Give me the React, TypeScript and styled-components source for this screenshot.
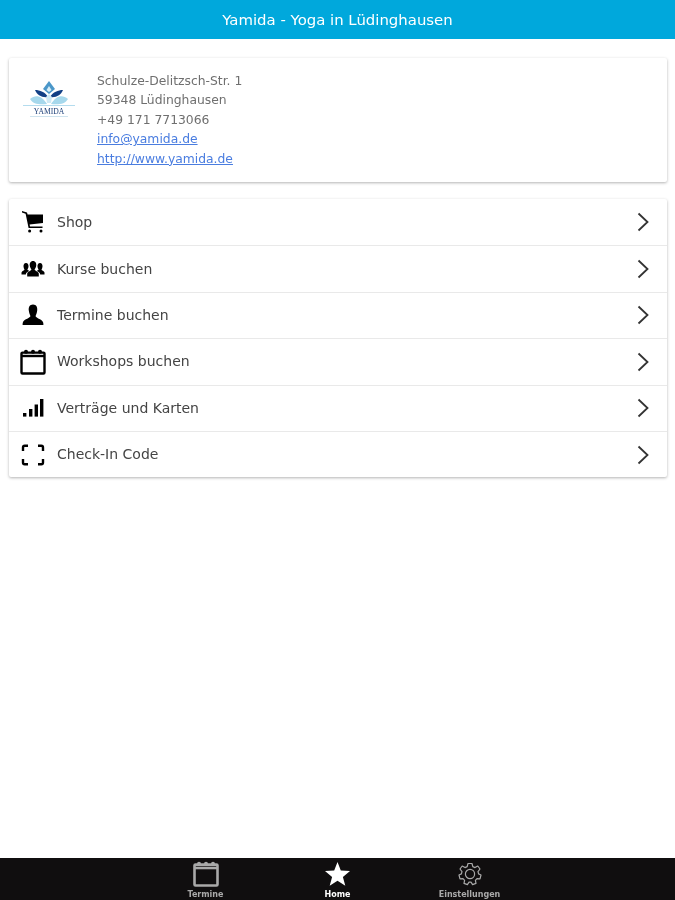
import React, { ReactNode } from "react";
import styled, { createGlobalStyle } from "styled-components";

const GlobalStyle = createGlobalStyle`
  html, body {
    margin: 0;
    padding: 0;
    background: #fff;
    font-family: "DejaVu Sans", "Liberation Sans", sans-serif;
  }
  * {
    box-sizing: border-box;
  }
`;

const Page = styled.div`
  width: 675px;
  height: 900px;
  display: flex;
  flex-direction: column;
  overflow: hidden;
  background: #fff;
  filter: blur(0.4px);
`;

const Header = styled.header`
  height: 39px;
  flex-shrink: 0;
  display: flex;
  align-items: center;
  justify-content: center;
  background: #00a8dc;
  color: #fff;
  font-size: 14.9px;
`;

const Content = styled.main`
  flex: 1;
  display: flex;
  flex-direction: column;
  gap: 17px;
  padding: 19px 8px 0 9px;
`;

const Card = styled.section`
  background: #fff;
  border-radius: 2px;
  box-shadow: 0 1px 3px rgba(0, 0, 0, 0.3);
`;

const InfoCard = styled(Card)`
  height: 124px;
  display: flex;
  padding: 14px 0 0 13px;
`;

const LogoBox = styled.div`
  width: 75px;
  padding-top: 7px;
  flex-shrink: 0;
`;

const Address = styled.div`
  display: flex;
  flex-direction: column;
  font-size: 12.35px;
  line-height: 19.4px;
  color: #6f6f6f;
`;

const TextLink = styled.a`
  color: #4a7de0;
  text-decoration: underline;
`;

const Row = styled.div`
  height: 46.4px;
  display: flex;
  align-items: center;
  padding: 0 18px 0 11px;
  border-top: 1px solid #e9e9e9;

  &:first-child {
    border-top: none;
  }
`;

const RowIcon = styled.span`
  width: 26px;
  height: 26px;
  margin-right: 11px;
  display: flex;
  align-items: center;
  justify-content: center;
  color: #000;
`;

const RowLabel = styled.span`
  flex: 1;
  margin-top: -1px;
  font-size: 14px;
  color: #444;
`;

const TabBar = styled.nav`
  height: 42px;
  flex-shrink: 0;
  display: flex;
  justify-content: center;
  background: #100e0f;
`;

const Tab = styled.div<{ $active?: boolean }>`
  width: 132px;
  height: 42px;
  padding-top: 3px;
  display: flex;
  flex-direction: column;
  align-items: center;
  color: ${({ $active }) => ($active ? "#fff" : "#a9a9a9")};
`;

const TabIcon = styled.div`
  height: 26px;
  display: flex;
  align-items: center;
  justify-content: center;
`;

const TabLabel = styled.span`
  margin-top: 3px;
  font-size: 8px;
  line-height: 10px;
  font-weight: 700;
  white-space: nowrap;
`;

function YamidaLogo() {
  return (
    <svg width="54" height="40" viewBox="0 0 54 40">
      <path d="M27 2 L33 10 L27 15 L21 10 Z" fill="#4b97c9" />
      <path d="M27 7 L29.5 11 L27 13 L24.5 11 Z" fill="#d8eef7" />
      <path d="M13 11 C18 11 23 13 26 18 C20 19 15 16 13 11 Z" fill="#123f85" />
      <path d="M41 11 C36 11 31 13 28 18 C34 19 39 16 41 11 Z" fill="#123f85" />
      <path d="M8 20 C14 15 20 17 25 25 C17 26 11 25 8 20 Z" fill="#a6d8ec" />
      <path d="M46 20 C40 15 34 17 29 25 C37 26 43 25 46 20 Z" fill="#a6d8ec" />
      <path d="M24 18 L27 15 L30 18 L29 24 L25 24 Z" fill="#cfe9f4" />
      <rect x="1" y="26" width="52" height="1" fill="#b4dcee" />
      <text
        x="27"
        y="34.5"
        textAnchor="middle"
        fontFamily="'Liberation Serif', serif"
        fontSize="7.6"
        fill="#1d3f78"
      >
        YAMIDA
      </text>
      <rect x="8" y="37" width="38" height="1" fill="#cfe3ee" />
    </svg>
  );
}

function CartIcon() {
  return (
    <svg width="24" height="24" viewBox="0 0 24 24" fill="currentColor">
      <path d="M1 1 L6 2.6 L6.6 4.5 H22 V13 L8.6 14.4 L9 16.6 H21.5 V18 H7.6 L4.6 3.8 L1 2.4 Z" />
      <circle cx="8.6" cy="21" r="1.5" />
      <circle cx="20" cy="21" r="1.5" />
    </svg>
  );
}

function GroupIcon() {
  return (
    <svg width="24" height="18" viewBox="0 0 24 18" fill="currentColor">
      <path d="M12 1 C14.6 1 15.6 3.4 15.2 5.8 C15 7.4 14.2 8.6 13.6 9.4 C13.6 10.6 17.4 11.4 17.8 13.4 V16.5 H6.2 V13.4 C6.6 11.4 10.4 10.6 10.4 9.4 C9.8 8.6 9 7.4 8.8 5.8 C8.4 3.4 9.4 1 12 1 Z" />
      <path d="M5 3 C7 3 7.6 5 7.5 6.6 C7.4 8 6.8 9 6.4 9.6 C6.6 10.2 7.6 10.6 8.2 11 C6.2 11.8 5 12.8 4.8 14.5 H0.5 V12.4 C0.9 11 3.4 10.6 3.5 9.6 C3 9 2.6 8 2.5 6.6 C2.4 5 3 3 5 3 Z" />
      <path d="M19 3 C21 3 21.6 5 21.5 6.6 C21.4 8 21 9 20.5 9.6 C20.6 10.6 23.1 11 23.5 12.4 V14.5 H19.2 C19 12.8 17.8 11.8 15.8 11 C16.4 10.6 17.4 10.2 17.6 9.6 C17.2 9 16.6 8 16.5 6.6 C16.4 5 17 3 19 3 Z" />
    </svg>
  );
}

function PersonIcon() {
  return (
    <svg width="24" height="24" viewBox="0 0 24 24" fill="currentColor">
      <path d="M12 1.5 C15.4 1.5 16.6 4.4 16.2 7.6 C16 9.8 15.2 11.6 14.6 13 C14.6 15 20.6 16 22 19 C22.4 20 22.4 21 22.4 22 H1.6 C1.6 21 1.6 20 2 19 C3.4 16 9.4 15 9.4 13 C8.8 11.6 8 9.8 7.8 7.6 C7.4 4.4 8.6 1.5 12 1.5 Z" />
    </svg>
  );
}

function CalendarIcon({ weight = 2.4 }: { weight?: number }) {
  return (
    <svg width="26" height="26" viewBox="0 0 26 26" fill="none" stroke="currentColor">
      <rect x="1.5" y="3.6" width="23" height="20.9" rx="1" strokeWidth={weight} />
      <path d="M1.5 7 H24.5" strokeWidth={weight} />
      <g fill="currentColor" stroke="none">
        <circle cx="6" cy="2.8" r="2" />
        <circle cx="13" cy="2.8" r="2" />
        <circle cx="20" cy="2.8" r="2" />
      </g>
    </svg>
  );
}

function SignalIcon() {
  return (
    <svg width="22" height="20" viewBox="0 0 22 20" fill="currentColor">
      <rect x="1" y="15" width="3.4" height="3.6" />
      <rect x="7" y="11" width="3.4" height="7.6" />
      <rect x="12.6" y="6.5" width="3.4" height="12.1" />
      <rect x="18" y="1" width="3.4" height="17.6" />
    </svg>
  );
}

function ScanIcon() {
  return (
    <svg width="24" height="22" viewBox="0 0 24 22" fill="none" stroke="currentColor" strokeWidth="2.4">
      <path d="M2 7 V3.5 C2 2.4 2.6 1.8 3.7 1.8 H7" />
      <path d="M17 1.8 H20.3 C21.4 1.8 22 2.4 22 3.5 V7" />
      <path d="M2 15 V18.5 C2 19.6 2.6 20.2 3.7 20.2 H7" />
      <path d="M17 20.2 H20.3 C21.4 20.2 22 19.6 22 18.5 V15" />
    </svg>
  );
}

function Chevron() {
  return (
    <svg width="12" height="20" viewBox="0 0 12 20" fill="none" stroke="#333" strokeWidth="1.8">
      <path d="M1.5 1.5 L10.5 10 L1.5 18.5" />
    </svg>
  );
}

function StarIcon() {
  return (
    <svg width="27" height="26" viewBox="0 0 27 26" fill="currentColor">
      <path d="M13.5 1 L16.8 9.6 L26 10.1 L18.9 15.9 L21.3 24.8 L13.5 19.8 L5.7 24.8 L8.1 15.9 L1 10.1 L10.2 9.6 Z" />
    </svg>
  );
}

function GearIcon() {
  return (
    <svg width="24" height="24" viewBox="0 0 24 24" fill="none" stroke="currentColor" strokeWidth="1.2">
      <path d="M10 1.5 H14 L14.8 4.6 L17 5.6 L19.8 4 L22 7 L20 9.6 L20.6 11.9 L23 13 L22 16.8 L19 16.6 L17.4 18.4 L18 21.4 L14.6 22.6 L13 20.2 H11 L9.4 22.6 L6 21.4 L6.6 18.4 L5 16.6 L2 16.8 L1 13 L3.4 11.9 L4 9.6 L2 7 L4.2 4 L7 5.6 L9.2 4.6 Z" strokeLinejoin="round" />
      <circle cx="12" cy="12" r="4.6" />
    </svg>
  );
}

type MenuEntry = { label: string; icon: ReactNode };

const menuEntries: MenuEntry[] = [
  { label: "Shop", icon: <CartIcon /> },
  { label: "Kurse buchen", icon: <GroupIcon /> },
  { label: "Termine buchen", icon: <PersonIcon /> },
  { label: "Workshops buchen", icon: <CalendarIcon /> },
  { label: "Verträge und Karten", icon: <SignalIcon /> },
  { label: "Check-In Code", icon: <ScanIcon /> },
];

export default function App() {
  return (
    <>
      <GlobalStyle />
      <Page>
        <Header>Yamida - Yoga in Lüdinghausen</Header>
        <Content>
          <InfoCard>
            <LogoBox>
              <YamidaLogo />
            </LogoBox>
            <Address>
              <span>Schulze-Delitzsch-Str. 1</span>
              <span>59348 Lüdinghausen</span>
              <span>+49 171 7713066</span>
              <TextLink href="#">info@yamida.de</TextLink>
              <TextLink href="#">http://www.yamida.de</TextLink>
            </Address>
          </InfoCard>
          <Card>
            {menuEntries.map((entry) => (
              <Row key={entry.label}>
                <RowIcon>{entry.icon}</RowIcon>
                <RowLabel>{entry.label}</RowLabel>
                <Chevron />
              </Row>
            ))}
          </Card>
        </Content>
        <TabBar>
          <Tab>
            <TabIcon>
              <CalendarIcon weight={2.6} />
            </TabIcon>
            <TabLabel>Termine</TabLabel>
          </Tab>
          <Tab $active>
            <TabIcon>
              <StarIcon />
            </TabIcon>
            <TabLabel>Home</TabLabel>
          </Tab>
          <Tab>
            <TabIcon>
              <GearIcon />
            </TabIcon>
            <TabLabel>Einstellungen</TabLabel>
          </Tab>
        </TabBar>
      </Page>
    </>
  );
}
